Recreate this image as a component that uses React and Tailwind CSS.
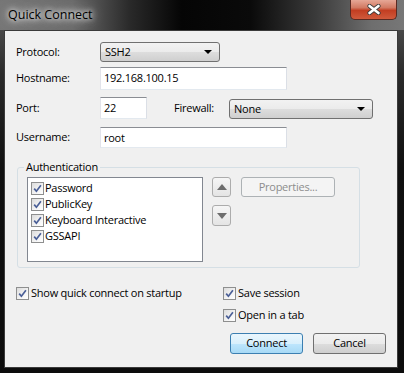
import React from "react";

const font = { fontFamily: '"Open Sans", "Noto Sans", sans-serif' };

const Check = () => (
  <span className="w-[13px] h-[13px] shrink-0 border border-[#8e8f8f] bg-[linear-gradient(135deg,#dcdcdc_0%,#f4f4f4_60%,#ffffff_100%)] flex items-center justify-center">
    <svg width="9" height="9" viewBox="0 0 9 9">
      <path d="M1.2 4.6 L3.4 7.2 L7.9 1.2" stroke="#4a5f97" strokeWidth="1.7" fill="none" />
    </svg>
  </span>
);

const Arrow = ({ up }) => (
  <svg width="10" height="6" viewBox="0 0 10 6">
    <path d={up ? "M0 6 L5 0 L10 6 Z" : "M0 0 L10 0 L5 6 Z"} fill="#6d6d6d" />
  </svg>
);

const Select = ({ value, className }) => (
  <div
    className={`h-[20px] rounded-[3px] border border-[#707070] bg-[linear-gradient(to_bottom,#f2f2f2_0%,#ebebeb_50%,#dddddd_51%,#cfcfcf_100%)] flex items-center justify-between pl-[4px] pr-[7px] text-black ${className}`}
  >
    <span>{value}</span>
    <svg width="8" height="4" viewBox="0 0 8 4">
      <path d="M0 0 L8 0 L4 4 Z" fill="#000" />
    </svg>
  </div>
);

const Input = ({ value, className }) => (
  <div
    className={`bg-white border border-[#abadb3] border-t-[#8a8d93] border-l-[#e2e3ea] border-r-[#dbdfe6] border-b-[#e3e9ef] flex items-start pl-[3px] pt-[2px] text-black ${className}`}
  >
    {value}
  </div>
);

const Button = ({ children, def }) => (
  <div
    className={`w-[73px] h-[21px] rounded-[3px] border flex items-center justify-center text-black ${
      def
        ? "border-[#3c7fb1] bg-[linear-gradient(to_bottom,#eaf6fd_0%,#d9f0fc_50%,#bee6fd_51%,#a7d9f5_100%)]"
        : "border-[#707070] bg-[linear-gradient(to_bottom,#f2f2f2_0%,#ebebeb_50%,#dddddd_51%,#cfcfcf_100%)]"
    }`}
  >
    {children}
  </div>
);

export default function App() {
  return (
    <div className="w-[404px] h-[373px] bg-[linear-gradient(to_bottom,#5c5c5c_0%,#2a2a2a_20%,#101010_45%,#0c0c0c_100%)] flex flex-col overflow-hidden" style={font}>
      <div className="h-[30px] shrink-0 flex items-start justify-between bg-[linear-gradient(to_right,#767676_0%,#6a6a6a_18%,#2a2a2a_32%,#050505_45%,#0a0a0a_62%,#3a3a3a_78%,#6e6e6e_92%,#777_100%)]">
        <span className="ml-[6px] mt-[6px] px-[2px] text-[12.5px] text-black [text-shadow:0_0_5px_#fff,0_0_9px_#eee,0_0_14px_#ccc]">
          Quick Connect
        </span>
        <div className="mr-[7px] w-[47px] h-[20px] rounded-b-[5px] border border-t-0 border-[#5a2a22] bg-[linear-gradient(to_bottom,#e6a796_0%,#d27a63_40%,#c23e22_55%,#d05a3c_100%)] flex items-center justify-center">
          <svg width="14" height="11" viewBox="0 0 14 11">
            <path d="M2.5 2 L11.5 9 M11.5 2 L2.5 9" stroke="#3a3a3a" strokeWidth="4.2" strokeLinecap="round" />
            <path d="M2.5 2 L11.5 9 M11.5 2 L2.5 9" stroke="#fff" strokeWidth="2.6" strokeLinecap="round" />
          </svg>
        </div>
      </div>

      <div className="ml-[4px] mr-[6px] w-[394px] h-[338px] border border-[#3b3b3b] bg-[#f0f0f0] flex flex-col pt-[11px] pl-[11px] text-[11px] tracking-[-0.25px] text-black">
        <div className="flex items-center h-[20px]">
          <span className="w-[84px]">Protocol:</span>
          <Select value="SSH2" className="w-[120px]" />
        </div>
        <div className="flex items-center h-[23px] mt-[5px]">
          <span className="w-[84px]">Hostname:</span>
          <Input value="192.168.100.15" className="w-[187px] h-[23px]" />
        </div>
        <div className="flex items-center h-[22px] mt-[7px]">
          <span className="w-[84px]">Port:</span>
          <Input value="22" className="w-[47px] h-[22px]" />
          <span className="ml-[27px] w-[55px]">Firewall:</span>
          <Select value="None" className="w-[144px] mt-[2px]" />
        </div>
        <div className="flex items-center h-[21px] mt-[8px]">
          <span className="w-[84px]">Username:</span>
          <Input value="root" className="w-[187px] h-[21px]" />
        </div>

        <fieldset className="mt-[12px] ml-[1px] w-[343px] h-[108px] border border-[#d5dfe5] rounded-[3px] pl-[9px] pb-[5px] flex">
          <legend className="ml-[-3px] px-[2px] leading-[14px]">Authentication</legend>
          <div className="flex mt-[3px]">
            <div className="w-[176px] h-[85px] bg-white border border-[#828790] flex flex-col pl-[3px] pt-[2px]">
              {["Password", "PublicKey", "Keyboard Interactive", "GSSAPI"].map((t) => (
                <div key={t} className="flex items-center h-[16px]">
                  <Check />
                  <span className="ml-[1px]">{t}</span>
                </div>
              ))}
            </div>
            <div className="ml-[9px] flex flex-col gap-[8px]">
              <div className="w-[19px] h-[20px] rounded-[3px] border border-[#acacac] bg-[linear-gradient(to_bottom,#f6f6f6,#e4e4e4)] flex items-center justify-center">
                <Arrow up />
              </div>
              <div className="w-[19px] h-[21px] rounded-[3px] border border-[#acacac] bg-[linear-gradient(to_bottom,#f6f6f6,#e4e4e4)] flex items-center justify-center">
                <Arrow />
              </div>
            </div>
            <div className="ml-[10px] w-[94px] h-[20px] rounded-[3px] border border-[#adb2b5] bg-[#f4f4f4] text-[#8d8d8d] flex items-center justify-center">
              Properties...
            </div>
          </div>
        </fieldset>

        <div className="flex mt-[18px]">
          <div className="w-[207px] flex items-center h-[14px]">
            <Check />
            <span className="ml-[2px]">Show quick connect on startup</span>
          </div>
          <div className="flex flex-col gap-[8px]">
            <div className="flex items-center h-[14px]">
              <Check />
              <span className="ml-[2px]">Save session</span>
            </div>
            <div className="flex items-center h-[14px]">
              <Check />
              <span className="ml-[2px]">Open in a tab</span>
            </div>
          </div>
        </div>

        <div className="flex justify-end gap-[10px] mt-[11px] pr-[11px]">
          <Button def>Connect</Button>
          <Button>Cancel</Button>
        </div>
      </div>
    </div>
  );
}
